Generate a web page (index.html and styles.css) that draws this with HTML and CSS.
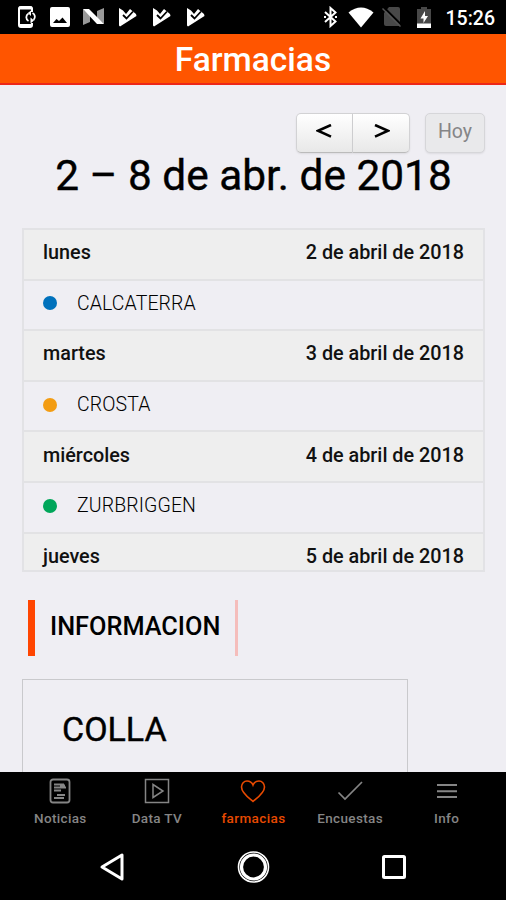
FILE: index.html
```html
<!DOCTYPE html>
<html lang="es">
<head>
    <meta charset="UTF-8">
    <meta name="viewport" content="width=device-width, initial-scale=1.0">
    <title>Farmacias</title>
    <link rel="stylesheet" href="styles.css">
</head>
<body>
    <div class="status-bar">
        <div class="status-icons">
            <svg width="20" height="24" viewBox="0 0 20 24">
                <path d="M15 7V3.500Q15 2 13 2H4Q2 2 2 3.500V20Q2 22 4 22H13Q15 22 15 20V18" fill="none" stroke="#fff" stroke-width="2"/>
                <path d="M2 3H15M2 20.500H15" stroke="#fff" stroke-width="3"/>
                <path d="M11.500 8.500A4.300 4.300 0 0 0 11.500 16M15.500 8A4.300 4.300 0 0 1 16.500 15" fill="none" stroke="#fff" stroke-width="1.800"/>
                <path d="M14 5.500V11L10.800 8ZM13.500 12.500V18.500L17 15.500Z" fill="#fff"/>
            </svg>
            <svg width="20" height="20" viewBox="0 0 20 20">
                <path d="M2 0H18Q20 0 20 2V18Q20 20 18 20H2Q0 20 0 18V2Q0 0 2 0ZM3 16H17L12.500 10.500L9 14L6.500 12Z" fill="#fff" fill-rule="evenodd"/>
            </svg>
            <svg width="22" height="18" viewBox="0 0 22 18">
                <path d="M0 1V17L7 14V7ZM21 0V16L14 10V3Z" fill="#999"/>
                <path d="M0 1H6L21 16H14Z" fill="#fff"/>
            </svg>
            <svg class="play-icon" width="19" height="20" viewBox="0 0 19 20">
                <path d="M1 1L5 3.500L8 7L12 2L18 7L18.500 9L2 19.500L1 18.500Z" fill="#fff"/>
                <path d="M5 8L8.500 11.500L15 4.500" fill="none" stroke="#000" stroke-width="1.800"/>
            </svg>
            <svg class="play-icon" width="19" height="20" viewBox="0 0 19 20">
                <path d="M1 1L5 3.500L8 7L12 2L18 7L18.500 9L2 19.500L1 18.500Z" fill="#fff"/>
                <path d="M5 8L8.500 11.500L15 4.500" fill="none" stroke="#000" stroke-width="1.800"/>
            </svg>
            <svg class="play-icon" width="19" height="20" viewBox="0 0 19 20">
                <path d="M1 1L5 3.500L8 7L12 2L18 7L18.500 9L2 19.500L1 18.500Z" fill="#fff"/>
                <path d="M5 8L8.500 11.500L15 4.500" fill="none" stroke="#000" stroke-width="1.800"/>
            </svg>
        </div>
        <div class="status-system">
            <svg width="14" height="22" viewBox="0 0 14 22">
                <path d="M1 6L11.500 15.500L6.500 20V2L11.500 6.500L1 16" fill="none" stroke="#fff" stroke-width="2"/>
                <path d="M0 11H2M11 11H13" stroke="#fff" stroke-width="2"/>
            </svg>
            <svg class="wifi-icon" width="26" height="21" viewBox="0 0 26 21">
                <path d="M0.500 5.500Q13 -4.500 25.500 5.500L13 20.500Z" fill="#fff"/>
            </svg>
            <svg class="sim-icon" width="20" height="20" viewBox="0 0 20 20">
                <path d="M7 0H16Q18 0 18 2V18L17 19H4Q2 19 2 17V6Z" fill="#484848"/>
                <path d="M1.500 0L20 18.500" stroke="#000" stroke-width="2"/>
                <path d="M0.500 1.500L18.500 19.500" stroke="#555" stroke-width="1.500"/>
            </svg>
            <svg class="battery-icon" width="14" height="21" viewBox="0 0 14 21">
                <path d="M4 0H10V2H14V17H0V2H4Z" fill="#484848"/>
                <path d="M0 16.500H14V21H0Z" fill="#fff"/>
                <path d="M8 4V9H11L6.500 16V11.500H3.500Z" fill="#fff"/>
            </svg>
            <span class="clock">15:26</span>
        </div>
    </div>

    <header class="header">
        <h1 class="header-title">Farmacias</h1>
    </header>

    <main class="content">
        <div class="toolbar">
            <div class="button-group">
                <button class="button" aria-label="Anterior"><svg width="16" height="14" viewBox="0 0 16 14"><path d="M15 1L2 6.800L15 12.600" fill="none" stroke="#000" stroke-width="2.600"/></svg></button>
                <button class="button" aria-label="Siguiente"><svg width="16" height="14" viewBox="0 0 16 14"><path d="M1 1L14 6.800L1 12.600" fill="none" stroke="#000" stroke-width="2.600"/></svg></button>
            </div>
            <button class="button button-today" disabled>Hoy</button>
        </div>
        <h2 class="range">2 – 8 de abr. de 2018</h2>

        <div class="schedule">
            <div class="day"><span>lunes</span><span>2 de abril de 2018</span></div>
            <div class="event"><span class="dot dot-blue"></span><span>CALCATERRA</span></div>
            <div class="day"><span>martes</span><span>3 de abril de 2018</span></div>
            <div class="event"><span class="dot dot-orange"></span><span>CROSTA</span></div>
            <div class="day"><span>miércoles</span><span>4 de abril de 2018</span></div>
            <div class="event"><span class="dot dot-green"></span><span>ZURBRIGGEN</span></div>
            <div class="day"><span>jueves</span><span>5 de abril de 2018</span></div>
        </div>

        <h3 class="info-title">INFORMACION</h3>

        <div class="card">
            <h3 class="card-title">COLLA</h3>
        </div>
    </main>

    <nav class="tabs">
        <a class="tab">
            <svg width="26" height="26" viewBox="0 0 26 26" fill="none" stroke="currentColor">
                <rect x="3.500" y="1.500" width="19" height="23" rx="2.500" stroke-width="1.800"/>
                <path d="M7 6.500H17M7 9.500H19M7 12.500H14M10 17H18M7 20H17" stroke-width="1.800"/>
                <path d="M13 6.500H18V10H13Z" fill="currentColor" stroke="none"/>
            </svg>
            <span>Noticias</span>
        </a>
        <a class="tab">
            <svg width="26" height="26" viewBox="0 0 26 26" fill="none" stroke="currentColor" stroke-width="1.500">
                <rect x="1.500" y="1.500" width="23" height="23"/>
                <path d="M9 6.500L19 13L9 19.500Z"/>
            </svg>
            <span>Data TV</span>
        </a>
        <a class="tab active">
            <svg width="26" height="26" viewBox="0 0 26 26" fill="none" stroke="currentColor" stroke-width="1.600">
                <path d="M13 23.500C9 20 1.500 15 1.500 9C1.500 5.500 4 3 7 3C10 3 12 4.500 13 7C14 4.500 16 3 19 3C22 3 24.500 5.500 24.500 9C24.500 15 17 20 13 23.500Z"/>
            </svg>
            <span>farmacias</span>
        </a>
        <a class="tab">
            <svg width="26" height="26" viewBox="0 0 26 26" fill="none" stroke="currentColor" stroke-width="1.700">
                <path d="M1.500 14.500L8 21L25 4"/>
            </svg>
            <span>Encuestas</span>
        </a>
        <a class="tab">
            <svg width="26" height="26" viewBox="0 0 26 26" fill="none" stroke="currentColor" stroke-width="2">
                <path d="M3 7H23M3 13.300H23M3 19H23"/>
            </svg>
            <span>Info</span>
        </a>
    </nav>

    <div class="android-nav">
        <svg width="28" height="32" viewBox="0 0 28 32"><path d="M24 4V28L4 16Z" fill="none" stroke="#fff" stroke-width="3" stroke-linejoin="round"/></svg>
        <svg width="34" height="34" viewBox="0 0 34 34" fill="none" stroke="#fff">
            <circle cx="17.500" cy="17" r="15" stroke-width="1.600"/>
            <circle cx="17.500" cy="17" r="12" stroke-width="3.200"/>
        </svg>
        <svg width="28" height="28" viewBox="0 0 28 28"><rect x="3.500" y="3.500" width="21" height="21" rx="1" fill="none" stroke="#fff" stroke-width="3"/></svg>
    </div>
</body>
</html>
```
FILE: styles.css
```css
* {
    box-sizing: border-box;
}

body {
    margin: 0;
    height: 900px;
    display: flex;
    flex-direction: column;
    overflow: hidden;
    background-color: #efeef3;
    color: #000;
    font-family: Roboto, "Liberation Sans", sans-serif;
}

h1, h2, h3 {
    margin: 0;
}

svg {
    display: block;
    flex-shrink: 0;
}

.status-bar {
    flex: none;
    height: 34px;
    display: flex;
    justify-content: space-between;
    align-items: center;
    padding: 0 11px 0 17px;
    background-color: #000;
}

.status-icons,
.status-system {
    display: flex;
    align-items: center;
}

.status-icons {
    gap: 13px;
}

.play-icon + .play-icon {
    margin-left: 2px;
}

.wifi-icon {
    margin-left: 10px;
}

.sim-icon {
    margin-left: 8px;
}

.battery-icon {
    margin-left: 15px;
}

.clock {
    margin-left: 15px;
    padding-top: 2px;
    color: #fff;
    font-size: 19.500px;
    font-weight: 500;
}

.header {
    flex: none;
    height: 51px;
    background-color: #ff5500;
    border-bottom: 2px solid #ed2718;
    text-align: center;
}

.header-title {
    color: #fff;
    font-size: 33.500px;
    font-weight: 500;
    line-height: 51px;
}

.content {
    flex: none;
    height: 687px;
    overflow: hidden;
    padding: 28px 21px 0 22px;
}

.toolbar {
    display: flex;
    justify-content: flex-end;
    gap: 15px;
}

.button-group {
    display: flex;
}

.button {
    display: flex;
    justify-content: center;
    align-items: center;
    width: 57px;
    height: 40px;
    padding: 0 2px 5px 0;
    border: 1px solid #d2d2d4;
    border-bottom-color: #bbb;
    border-radius: 5px 0 0 5px;
    background: linear-gradient(#fff, #e8e8e8);
    box-shadow: 0 1px 2px rgba(0, 0, 0, 0.08);
}

.button + .button {
    padding: 0 0 5px 2px;
    border-left-width: 0;
    border-radius: 0 5px 5px 0;
}

.button.button-today {
    width: 60px;
    padding: 0 0 3px;
    border-color: #d6d6d9;
    border-radius: 5px;
    background: #e9e9eb;
    color: #858587;
    font-family: inherit;
    font-size: 19.500px;
}

.range {
    margin-top: -3px;
    font-size: 42.400px;
    font-weight: 400;
    line-height: 52px;
    text-align: center;
    -webkit-text-stroke: 0.400px #000;
}

.schedule {
    height: 344px;
    margin-top: 26px;
    border: 2px solid #e2e2e5;
    overflow: hidden;
}

.day,
.event {
    display: flex;
    align-items: center;
    height: 50.600px;
    padding: 0 19px 3px;
    border-bottom: 2px solid #e2e2e4;
    font-size: 19.500px;
}

.day {
    justify-content: space-between;
    background-color: #eee;
    color: #111;
    font-size: 19.800px;
    font-weight: 500;
}

.event {
    color: #000;
    font-weight: 300;
    letter-spacing: 0.100px;
}

.dot {
    width: 14px;
    height: 14px;
    margin-right: 20px;
    border-radius: 50%;
}

.dot-blue {
    background-color: #0071bc;
}

.dot-orange {
    background-color: #f39c12;
}

.dot-green {
    background-color: #00a65a;
}

.info-title {
    width: 210px;
    height: 56px;
    margin: 28px 0 0 6px;
    padding-left: 15px;
    border-left: 7px solid #ff4500;
    border-right: 3px solid #f5bdbb;
    font-size: 25.300px;
    font-weight: 500;
    line-height: 53px;
}

.card {
    width: 386px;
    height: 200px;
    margin-top: 23px;
    padding: 28px 39px;
    border: 1px solid #c9c9cc;
}

.card-title {
    font-size: 34px;
    font-weight: 400;
    line-height: 42px;
    -webkit-text-stroke: 0.400px #000;
}

.tabs {
    flex: none;
    height: 61px;
    display: flex;
    padding: 6px 11px 0 12px;
    background-color: #000;
}

.tab {
    flex: 1;
    display: flex;
    flex-direction: column;
    align-items: center;
    gap: 6px;
    color: #858585;
    font-size: 13.500px;
    font-weight: 500;
    line-height: 17px;
    letter-spacing: 0.350px;
}

.active {
    color: #e84a00;
    letter-spacing: 0.400px;
}

.android-nav {
    flex: 1;
    display: flex;
    justify-content: center;
    align-items: center;
    gap: 110px;
    background-color: #000;
}
```
